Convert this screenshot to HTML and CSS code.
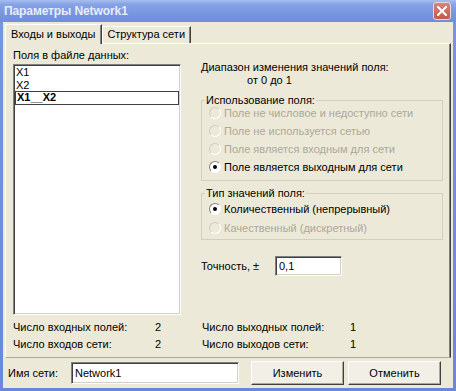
FILE: index.html
```html
<!DOCTYPE html>
<html lang="ru">
<head>
<meta charset="utf-8">
<title>Параметры Network1</title>
<link rel="stylesheet" href="styles.css">
</head>
<body>
<div class="window">
  <div class="titlebar">
    <span class="title">Параметры Network1</span>
    <span class="close">
      <svg width="10" height="10" viewBox="0 0 10 10"><path d="M1 1 L9 9 M9 1 L1 9" stroke="#fff" stroke-width="2" stroke-linecap="square"/></svg>
    </span>
  </div>
  <div class="client">
    <div class="tabs">
      <div class="tab active">Входы и выходы</div>
      <div class="tab">Структура сети</div>
    </div>
    <div class="panel">
      <div class="leftcol">
        <div class="label">Поля в файле данных:</div>
        <div class="listbox">
          <div class="item">X1</div>
          <div class="item">X2</div>
          <div class="item selected">X1__X2</div>
        </div>
      </div>
      <div class="rightcol">
        <div class="range">Диапазон изменения значений поля:</div>
        <div class="range-val">от 0 до 1</div>
        <fieldset class="group g1">
          <legend>Использование поля:</legend>
          <div class="radios">
            <div class="radio disabled"><span class="rb"></span>Поле не числовое и недоступно сети</div>
            <div class="radio disabled"><span class="rb"></span>Поле не используется сетью</div>
            <div class="radio disabled"><span class="rb"></span>Поле является входным для сети</div>
            <div class="radio"><span class="rb on"></span>Поле является выходным для сети</div>
          </div>
        </fieldset>
        <fieldset class="group g2">
          <legend>Тип значений поля:</legend>
          <div class="radios">
            <div class="radio"><span class="rb on"></span>Количественный (непрерывный)</div>
            <div class="radio disabled"><span class="rb"></span>Качественный (дискретный)</div>
          </div>
        </fieldset>
        <div class="precision">
          <span class="plabel">Точность, ±</span>
          <span class="edit pedit">0,1</span>
        </div>
      </div>
      <div class="stats">
        <div class="stat"><span class="sl">Число входных полей:</span><span class="sv">2</span></div>
        <div class="stat"><span class="sl">Число входов сети:</span><span class="sv">2</span></div>
      </div>
      <div class="stats">
        <div class="stat"><span class="sl r">Число выходных полей:</span><span class="sv">1</span></div>
        <div class="stat"><span class="sl r">Число выходов сети:</span><span class="sv">1</span></div>
      </div>
    </div>
    <div class="footer">
      <span class="nlabel">Имя сети:</span>
      <span class="edit nedit">Network1</span>
      <span class="btn b1">Изменить</span>
      <span class="btn b2">Отменить</span>
    </div>
  </div>
</div>
</body>
</html>
```
FILE: styles.css
```css
* { box-sizing: border-box; }
html, body { margin: 0; padding: 0; }
body {
  width: 456px;
  height: 391px;
  overflow: hidden;
  font-family: "Liberation Sans", Arial, sans-serif;
  font-size: 11px;
  color: #000;
  background: #7392DF;
}
.window {
  width: 456px;
  height: 391px;
  display: flex;
  flex-direction: column;
  background: linear-gradient(#7895E0, #6A88DA);
  padding: 0 3px 3px 3px;
}
.titlebar {
  height: 22px;
  margin: 0 -3px;
  display: flex;
  align-items: center;
  justify-content: space-between;
  padding: 0 5px 0 4px;
  background: linear-gradient(#A7BEEE 0%, #86A3E6 20%, #7895E0 60%, #6F8EDD 100%);
}
.title {
  font-weight: bold;
  font-size: 12px;
  color: #E6EDFB;
  letter-spacing: -0.1px;
}
.close {
  width: 18px;
  height: 18px;
  border: 1px solid #E9D8D8;
  border-radius: 3px;
  background: linear-gradient(#D4867C, #C2594C);
  display: flex;
  align-items: center;
  justify-content: center;
}
.client {
  flex: 1;
  background: #ECE9D8;
  display: flex;
  flex-direction: column;
  padding: 0 2px 0 2px;
}
.tabs {
  height: 21px;
  display: flex;
  align-items: flex-end;
  position: relative;
  z-index: 1;
}
.tab {
  height: 17px;
  padding: 0 5px 0 4px;
  line-height: 15px;
  border-top: 1px solid #fff;
  border-left: 1px solid #fff;
  border-right: 1px solid #404040;
  box-shadow: inset -1px 0 #808080;
  background: #ECE9D8;
}
.tab.active {
  height: 20px;
  margin-bottom: -1px;
  padding: 0 6px 0 5px;
  line-height: 18px;
}
.panel {
  height: 315px;
  border-top: 1px solid #fff;
  border-left: 1px solid #fff;
  border-right: 1px solid #404040;
  border-bottom: 1px solid #ACA899;
  box-shadow: inset -1px 0 #808080;
  display: grid;
  grid-template-columns: 168px 242px;
  grid-template-rows: 271px 38px;
  column-gap: 20px;
  padding: 5px 0 0 7px;
}
.label, .range, .range-val { line-height: 13px; height: 13px; }
.listbox {
  margin-top: 2px;
  height: 251px;
  background: #fff;
  border-top: 1px solid #808080;
  border-left: 1px solid #808080;
  border-right: 1px solid #fff;
  border-bottom: 1px solid #fff;
  box-shadow: inset 1px 1px #404040, inset -1px -1px #D4D0C8;
  padding: 1px 1px 0 1px;
}
.item {
  height: 13px;
  line-height: 13px;
  padding-left: 1px;
}
.item.selected {
  font-weight: bold;
  border: 1px solid #404040;
  height: 14px;
  line-height: 11px;
  margin-top: -1px;
}
.rightcol { padding-top: 12px; }
.range-val { padding-left: 46px; }
.group {
  margin: 7px 0 0 0;
  padding: 0 3px 2px 3px;
  border: 1px solid #D0D0BF;
  min-width: 0;
}
.group legend {
  padding: 0 1px;
  line-height: 13px;
  margin-left: 0;
}
.g1 .radios { margin-top: -3px; padding-bottom: 2px; }
.g1 .radio { height: 18px; }
.g2 { margin-top: 6px; }
.g2 .radios { margin-top: -1px; }
.g2 .radio { height: 19px; }
.radio {
  display: flex;
  align-items: center;
  padding-left: 4px;
}
.radio.disabled { color: #ACA899; }
.rb {
  width: 12px;
  height: 12px;
  border-radius: 50%;
  border: 1px solid;
  border-color: #808080 #fff #fff #808080;
  background: #fff;
  margin-right: 3px;
  display: flex;
  align-items: center;
  justify-content: center;
  flex: none;
}
.disabled .rb { background: #ECE9D8; border-color: #D0CDC0 #fff #fff #D0CDC0; }
.rb.on::after {
  content: "";
  width: 4px;
  height: 4px;
  border-radius: 50%;
  background: #000;
}
.precision {
  margin-top: 16px;
  display: flex;
  align-items: center;
}
.plabel { width: 74px; }
.edit {
  background: #fff;
  border-top: 1px solid #808080;
  border-left: 1px solid #808080;
  border-right: 1px solid #fff;
  border-bottom: 1px solid #fff;
  box-shadow: inset 1px 1px #404040, inset -1px -1px #D4D0C8;
  padding-left: 3px;
  display: flex;
  align-items: center;
}
.pedit { width: 67px; height: 20px; }
.stats { padding-top: 1px; }
.stat { height: 17px; line-height: 13px; display: flex; }
.sl { width: 142px; }
.sl.r { width: 148px; margin-left: 1px; }
.footer {
  flex: 1;
  display: flex;
  align-items: center;
  padding-left: 3px;
}
.nlabel { width: 63px; }
.nedit { width: 168px; height: 22px; }
.btn {
  height: 24px;
  width: 93px;
  display: flex;
  align-items: center;
  justify-content: center;
  background: #F2F0E6;
  border-top: 1px solid #fff;
  border-left: 1px solid #fff;
  border-right: 1px solid #404040;
  border-bottom: 1px solid #404040;
  box-shadow: inset -1px -1px #ACA899;
}
.b1 { margin-left: 12px; }
.b2 { margin-left: 4px; }
```
